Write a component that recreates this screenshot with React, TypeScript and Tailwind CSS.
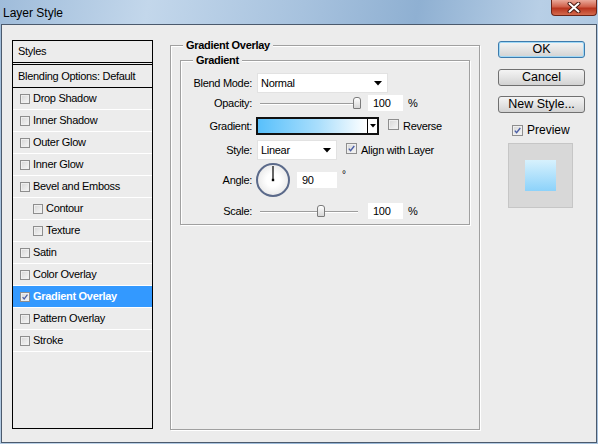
import React from "react";

const ui = "font-['Liberation_Sans',Arial,sans-serif]";

function Check({ checked = false, size = 11 }: { checked?: boolean; size?: number }) {
  return (
    <span
      className="relative inline-flex shrink-0 items-center justify-center border border-[#8e8e8e] bg-[linear-gradient(135deg,#d6d6d6,#f7f7f7)] shadow-[inset_0_0_0_1px_#efefef]"
      style={{ width: size, height: size }}
    >
      {checked && (
        <svg viewBox="0 0 11 11" className="absolute inset-0 h-full w-full">
          <path d="M2.2 5.6 L4.4 8.2 L8.9 2.4" fill="none" stroke="#4a5ea6" strokeWidth="1.7" />
        </svg>
      )}
    </span>
  );
}

function Arrow() {
  return (
    <svg width="8" height="5" viewBox="0 0 8 5">
      <path d="M0 0 H8 L4 4.5 Z" fill="#000" />
    </svg>
  );
}

function Select({ value, width }: { value: string; width: number }) {
  return (
    <div
      className="flex h-[20px] items-center justify-between border border-[#e2e2e2] bg-white pl-[3px] pr-[5px]"
      style={{ width }}
    >
      <span>{value}</span>
      <Arrow />
    </div>
  );
}

function Slider({ pos }: { pos: number }) {
  return (
    <div className="relative h-[14px] w-[104px]">
      <div className="absolute left-[3px] right-[3px] top-[7px] h-[2px] border-t border-[#9d9d9d] bg-white" />
      <div
        className="absolute top-[1px] h-[12px] w-[8px] rounded-t-[3px] rounded-b-[1px] border border-[#7b7b7b] bg-[linear-gradient(#ffffff,#d6d6d6)]"
        style={{ left: pos }}
      />
    </div>
  );
}

function NumBox({ value, width }: { value: string; width: number }) {
  return (
    <div className="flex h-[16px] items-center bg-white pl-[5px]" style={{ width }}>
      {value}
    </div>
  );
}

function Label({ children }: { children: React.ReactNode }) {
  return <span className="mr-[5px] w-[71px] shrink-0 text-right">{children}</span>;
}

const layers = [
  { label: "Drop Shadow" },
  { label: "Inner Shadow" },
  { label: "Outer Glow" },
  { label: "Inner Glow" },
  { label: "Bevel and Emboss" },
  { label: "Contour", indent: true },
  { label: "Texture", indent: true },
  { label: "Satin" },
  { label: "Color Overlay" },
  { label: "Gradient Overlay", active: true },
  { label: "Pattern Overlay" },
  { label: "Stroke" },
];

export default function App() {
  return (
    <div
      className={`flex h-[444px] w-[598px] flex-col overflow-hidden bg-[linear-gradient(100deg,#9fbcda_0%,#c3d7eb_22%,#a7c2de_45%,#8fb0d2_62%,#b8cfe6_80%,#a6c1dd_100%)] text-[11px] tracking-[-0.3px] text-black ${ui}`}
    >
      {/* Title bar */}
      <div className="flex h-[24px] shrink-0 items-start justify-between">
        <span className="mt-[4px] pl-[3px] text-[12px] tracking-normal text-black">Layer Style</span>
        <div className="mr-[1px] flex h-[16px] w-[46px] items-center justify-center rounded-b-[4px] border border-t-0 border-[#6b2418] bg-[linear-gradient(#eaa99a,#d0604a_45%,#b8341e_55%,#d46a4d)]">
          <svg width="14" height="11" viewBox="0 0 14 11">
            <path d="M2.5 1.5 L11.5 9.5 M11.5 1.5 L2.5 9.5" stroke="#4a1a12" strokeWidth="4" strokeLinecap="round" />
            <path d="M2.5 1.5 L11.5 9.5 M11.5 1.5 L2.5 9.5" stroke="#fff" strokeWidth="2" strokeLinecap="round" />
          </svg>
        </div>
      </div>

      {/* Dialog body */}
      <div className="mx-[1px] mb-[1px] flex flex-1 items-start border border-[#4b5a6d] bg-[#ececec] pl-[10px] pt-[15px]">
        {/* Styles list */}
        <div className="flex h-[389px] w-[141px] shrink-0 flex-col border border-black">
          <div className="flex h-[21px] items-center pl-[5px]">Styles</div>
          <div className="h-[3px] border-y border-black" />
          <div className="flex h-[23px] items-center border-b border-black pl-[5px]">Blending Options: Default</div>
          {layers.map((l) => (
            <div
              key={l.label}
              className={`flex h-[22px] items-center border-b border-white ${l.indent ? "pl-[20px]" : "pl-[7px]"} ${
                l.active ? "bg-[#3399ff] font-bold text-white" : ""
              }`}
            >
              <Check size={10} checked={l.active} />
              <span className="ml-[3px]">{l.label}</span>
            </div>
          ))}
        </div>

        {/* Gradient Overlay */}
        <fieldset className="-mt-px ml-[17px] h-[391px] w-[310px] shrink-0 border border-[#a0a0a0] shadow-[inset_1px_1px_0_#fff,1px_1px_0_#fff]">
          <legend className="ml-[12px] bg-[#ececec] px-[3px] text-[11px] font-bold leading-[13px]">Gradient Overlay</legend>
          <fieldset className="ml-[9px] mt-[2px] w-[290px] border border-[#a0a0a0] pb-[5px] shadow-[inset_1px_1px_0_#fff,1px_1px_0_#fff]">
            <legend className="ml-[12px] bg-[#ececec] px-[3px] font-bold leading-[13px]">Gradient</legend>
            <div className="flex flex-col pt-[6px]">
              <div className="flex h-[20px] items-center">
                <Label>Blend Mode:</Label>
                <Select value="Normal" width={131} />
              </div>
              <div className="mt-[2px] flex h-[16px] items-center">
                <Label>Opacity:</Label>
                <Slider pos={96} />
                <div className="ml-[7px]">
                  <NumBox value="100" width={35} />
                </div>
                <span className="ml-[5px]">%</span>
              </div>
              <div className="mt-[6px] flex h-[18px] items-center">
                <Label>Gradient:</Label>
                <div className="-ml-px flex h-[18px] w-[123px] border-2 border-[#111]">
                  <div className="flex-1 bg-[linear-gradient(90deg,#58c0fb,#a9defc_55%,#ffffff)]" />
                  <div className="flex w-[10px] items-center justify-center border-l border-black bg-white">
                    <svg width="6" height="4" viewBox="0 0 6 4">
                      <path d="M0 0 H6 L3 3.5 Z" fill="#000" />
                    </svg>
                  </div>
                </div>
                <span className="ml-[9px]">
                  <Check />
                </span>
                <span className="ml-[4px]">Reverse</span>
              </div>
              <div className="mt-[5px] flex h-[20px] items-center">
                <Label>Style:</Label>
                <Select value="Linear" width={80} />
                <span className="ml-[9px]">
                  <Check checked />
                </span>
                <span className="ml-[4px]">Align with Layer</span>
              </div>
              <div className="mt-[3px] flex h-[34px] items-center">
                <Label>Angle:</Label>
                <div className="relative -ml-px h-[34px] w-[34px] rounded-full border-2 border-[#5b6a8a] bg-[radial-gradient(circle,#ffffff_30%,#dedede)]">
                  <svg width="30" height="30" viewBox="0 0 30 30" className="absolute inset-0">
                    <path d="M15 15 V1" stroke="#000" strokeWidth="1.2" />
                    <rect x="13.8" y="13.8" width="2.4" height="2.4" fill="#000" />
                  </svg>
                </div>
                <div className="ml-[7px]">
                  <NumBox value="90" width={40} />
                </div>
                <span className="mb-[12px] ml-[5px] text-[10px]">°</span>
              </div>
              <div className="mt-[6px] flex h-[16px] items-center">
                <Label>Scale:</Label>
                <Slider pos={60} />
                <div className="ml-[7px]">
                  <NumBox value="100" width={35} />
                </div>
                <span className="ml-[5px]">%</span>
              </div>
            </div>
          </fieldset>
        </fieldset>

        {/* Buttons */}
        <div className="ml-[18px] mt-[1px] flex w-[87px] shrink-0 flex-col items-stretch text-[12.5px] tracking-normal">
          <button className="h-[17px] rounded-[3px] border border-[#3d7bad] bg-[linear-gradient(#f4f4f4,#e4e4e4_50%,#d2d2d2)] leading-none shadow-[inset_0_0_0_1px_#9fd8f6]">
            OK
          </button>
          <button className="mt-[11px] h-[17px] rounded-[3px] border border-[#707070] bg-[linear-gradient(#f4f4f4,#e4e4e4_50%,#d2d2d2)] leading-none">
            Cancel
          </button>
          <button className="mt-[10px] h-[17px] rounded-[3px] border border-[#707070] bg-[linear-gradient(#f4f4f4,#e4e4e4_50%,#d2d2d2)] leading-none">
            New Style...
          </button>
          <div className="mt-[8px] flex items-center pl-[14px] text-[12px]">
            <Check checked size={11} />
            <span className="ml-[4px]">Preview</span>
          </div>
          <div className="ml-[10px] mt-[4px] flex h-[65px] w-[65px] items-center justify-center border border-[#c6c6c6] bg-[#d8d8d8]">
            <div className="h-[31px] w-[31px] bg-[linear-gradient(#d7f1fd,#8cd2fa)]" />
          </div>
        </div>
      </div>
    </div>
  );
}
